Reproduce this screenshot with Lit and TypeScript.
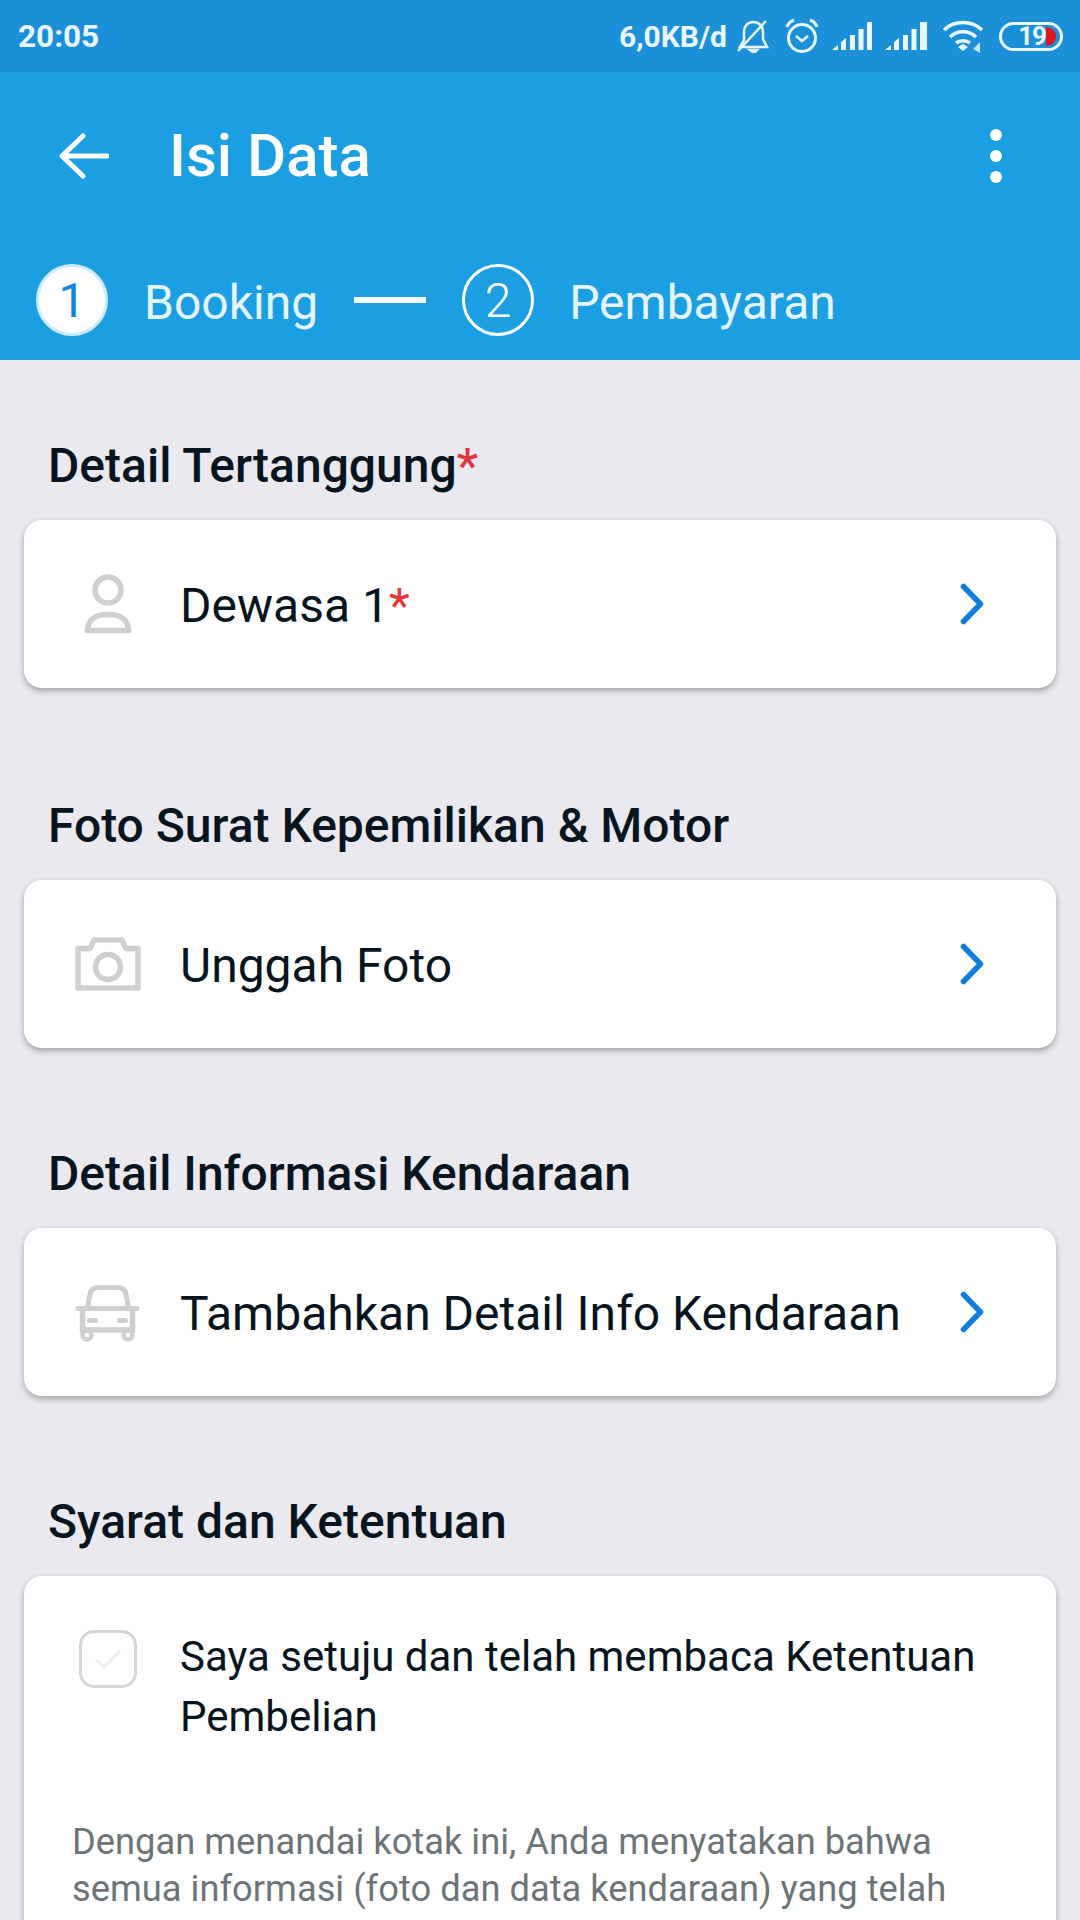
import { LitElement, html, css, svg } from "lit";
import { customElement } from "lit/decorators.js";

const chevron = html`<svg class="chev" viewBox="0 0 24 42" width="24" height="42"><path d="M3.500 3.500 L20.500 21 L3.500 38.500" fill="none" stroke="#0f7fdb" stroke-width="5.500" stroke-linecap="round" stroke-linejoin="round"/></svg>`;

const person = html`<svg viewBox="0 0 72 60" width="72" height="60"><circle cx="36" cy="16" r="13" fill="none" stroke="#cfcfcf" stroke-width="5.500"/><path d="M15.500 56.500 C15.500 46 23 40.500 36 40.500 C49 40.500 56.500 46 56.500 56.500 Z" fill="none" stroke="#cfcfcf" stroke-width="5.500" stroke-linejoin="round"/></svg>`;

const camera = html`<svg viewBox="0 0 72 54" width="72" height="54"><path d="M6 11.500 H18 L22 3 H50 L54 11.500 H66 V51 H6 Z" fill="none" stroke="#cfcfcf" stroke-width="5.500" stroke-linejoin="round"/><circle cx="36" cy="30" r="12.500" fill="none" stroke="#cfcfcf" stroke-width="5.500"/></svg>`;

const car = html`<svg viewBox="0 -3 72 60" width="72" height="60"><path d="M15.500 23 L18 9 C19 4 22 2.500 27 2.500 H45 C50 2.500 53 4 54 9 L56.500 23" fill="none" stroke="#cfcfcf" stroke-width="5"/><path d="M6 23.500 H65" stroke="#cfcfcf" stroke-width="5" stroke-linecap="round"/><path d="M10.500 23 V45 H60.500 V23" fill="none" stroke="#cfcfcf" stroke-width="5.500"/><rect x="15" y="33" width="11" height="5" rx="2.500" fill="#cfcfcf"/><rect x="45" y="33" width="11" height="5" rx="2.500" fill="#cfcfcf"/><circle cx="15" cy="50" r="4.500" fill="none" stroke="#cfcfcf" stroke-width="4.500"/><circle cx="56" cy="50" r="4.500" fill="none" stroke="#cfcfcf" stroke-width="4.500"/></svg>`;

const bars = (w: number) => svg`<svg viewBox="0 0 ${w} 30" width="${w}" height="30"><path d="M0 29 L6 24 V29 Z M9 21 L14 17 V29 H9 Z M18 14 H23 V29 H18 Z M26.500 8 H31.500 V29 H26.500 Z M35 1 H${w} V29 H35 Z" fill="#e9f7fd"/></svg>`;

@customElement("app-root")
export class AppRoot extends LitElement {
  static styles = css`
    :host { display: block; width: 1080px; height: 1920px; overflow: hidden; background: #e9e9ef; font-family: Roboto, "Liberation Sans", sans-serif; color: #08141e; }
    .status { height: 72px; background: #1b90d9; display: flex; align-items: center; padding: 0 17px 0 18px; color: #e9f7fd; font-weight: 700; font-size: 30px; }
    .time { flex: 1; font-size: 31.500px; }
    .speed { margin-right: 10px; }
    .status svg { display: block; flex: none; }
    .bell { margin-right: 16px; }
    .alarm { margin-right: 13px; }
    .sig1 { margin-right: 13px; }
    .sig2 { margin-right: 15px; }
    .wifi { margin-right: 15px; }
    .battery { position: relative; width: 64px; height: 29px; box-sizing: border-box; border: 3px solid #e9f7fd; border-radius: 15px; display: flex; align-items: center; justify-content: flex-end; padding-right: 14px; font-size: 26px; }
    .battery span { position: relative; letter-spacing: -1px; }
    .battery i { position: absolute; right: 4px; top: 2px; width: 10px; height: 19px; background: #e0141e; border-radius: 0 10px 10px 0; }
    .header { height: 288px; background: #1c9fe2; color: #fff; box-sizing: border-box; }
    .bar { height: 168px; display: flex; align-items: center; padding: 0 78px 0 59px; box-sizing: border-box; }
    .back { margin-right: 60px; display: block; }
    .title { flex: 1; font-size: 60px; font-weight: 500; line-height: 64px; }
    .dots { display: flex; flex-direction: column; gap: 9px; }
    .dots i { width: 12px; height: 12px; border-radius: 50%; background: #fff; }
    .steps { display: flex; align-items: center; padding-left: 36px; height: 72px; margin-top: 24px; font-size: 48px; color: #e6f5fd; }
    .num { width: 72px; height: 72px; box-sizing: border-box; border-radius: 50%; border: 3px solid #fff; display: flex; align-items: center; justify-content: center; font-size: 48px; font-weight: 300; color: #fff; flex: none; }
    .num.on { background: #fff; border-color: #cdebf9; color: #0f85e0; font-weight: 400; }
    .lab { margin-left: 36px; padding-top: 4px; }
    .lab.second { margin-left: 35px; }
    .line { width: 72px; height: 6px; background: #fff; margin: 0 36px; }
    .content { padding: 0 24px; }
    .sec { padding-top: 96px; }
    .sec.first { padding-top: 76px; margin-bottom: 12px; }
    h2 { margin: 0 0 26px; padding: 1px 0 0 24px; height: 57px; font-size: 48px; font-weight: 500; line-height: 58px; color: #08141e; }
    .star { color: #e2363f; }
    .card { background: #fff; border-radius: 18px; box-shadow: 0 3px 6px rgba(0, 0, 0, .3); height: 168px; display: flex; align-items: center; padding: 0 72px 0 48px; box-sizing: border-box; }
    .card svg { display: block; flex: none; }
    .ic { width: 72px; margin-right: 36px; flex: none; display: flex; justify-content: center; }
    .txt { flex: 1; font-size: 48px; line-height: 60px; padding-top: 4px; }
    .terms { height: 600px; display: block; padding: 54px 48px 0 48px; }
    .row { display: flex; align-items: flex-start; }
    .box { width: 58px; height: 58px; margin: 0 7px; box-sizing: border-box; border: 3px solid #d6d6d6; border-radius: 15px; display: flex; align-items: center; justify-content: center; }
    .row .txt { font-size: 42px; line-height: 60px; margin-top: -3px; padding-top: 0; }
    .note { margin: 71px 0 0; font-size: 36.300px; line-height: 47px; color: #6c7478; }
  `;

  private sec(title: string, icon: unknown, label: string, star = false, first = false) {
    return html`<section class="sec ${first ? "first" : ""}">
      <h2>${title}${star ? html`<span class="star">*</span>` : ""}</h2>
      <div class="card">
        <div class="ic">${icon}</div>
        <div class="txt">${label}${star ? html`<span class="star">*</span>` : ""}</div>
        ${chevron}
      </div>
    </section>`;
  }

  render() {
    return html`
      <div class="status">
        <span class="time">20:05</span>
        <span class="speed">6,0KB/d</span>
        <svg class="bell" viewBox="0 0 32 34" width="32" height="34" fill="none" stroke="#e9f7fd" stroke-width="2.500"><path d="M3 28 H30 L26 20 V13 C26 7 22 3 16 3 C10 3 7 8 7 13 V21 Z"/><path d="M1 32 L29 2"/><path d="M13 31 H20 L17 34 Z" fill="#e9f7fd"/></svg>
        <svg class="alarm" viewBox="0 0 34 36" width="34" height="36" fill="none" stroke="#e9f7fd" stroke-width="3"><circle cx="17" cy="20" r="13.500"/><path d="M11 18 L17 23 L23 18" stroke-width="2.500"/><path d="M2 9 C3 6 6 3 9 2 M25 2 C28 3 31 6 32 9"/></svg>
        <span class="sig1">${bars(40)}</span>
        <span class="sig2">${bars(42)}</span>
        <svg class="wifi" viewBox="0 0 42 33" width="42" height="33" fill="none" stroke="#e9f7fd" stroke-width="3.500"><path d="M2 10 C12 0 30 0 40 10"/><path d="M8 17 C15 10 27 10 34 17"/><path d="M14 23 C18 20 24 20 28 23"/><path d="M16 27 L21 24 L26 27 L21 31 Z" fill="#e9f7fd" stroke="none"/><path d="M38 22 V33 L31 29 Z" fill="#e9f7fd" stroke="none" opacity=".8"/></svg>
        <div class="battery"><i></i><span>19</span></div>
      </div>
      <div class="header">
        <div class="bar">
          <svg class="back" viewBox="0 0 50 48" width="50" height="48"><path d="M48 24 H4 M24 4 L3 24 L24 44" fill="none" stroke="#fff" stroke-width="5" stroke-linecap="round" stroke-linejoin="round"/></svg>
          <div class="title">Isi Data</div>
          <div class="dots"><i></i><i></i><i></i></div>
        </div>
        <div class="steps">
          <div class="num on">1</div>
          <div class="lab">Booking</div>
          <div class="line"></div>
          <div class="num">2</div>
          <div class="lab second">Pembayaran</div>
        </div>
      </div>
      <div class="content">
        ${this.sec("Detail Tertanggung", person, "Dewasa 1", true, true)}
        ${this.sec("Foto Surat Kepemilikan & Motor", camera, "Unggah Foto")}
        ${this.sec("Detail Informasi Kendaraan", car, "Tambahkan Detail Info Kendaraan")}
        <section class="sec">
          <h2>Syarat dan Ketentuan</h2>
          <div class="card terms">
            <div class="row">
              <div class="ic"><div class="box"><svg viewBox="0 0 30 24" width="30" height="24"><path d="M3 13 L11 20 L27 4" fill="none" stroke="#efefef" stroke-width="3.500"/></svg></div></div>
              <div class="txt">Saya setuju dan telah membaca Ketentuan Pembelian</div>
            </div>
            <div class="note">Dengan menandai kotak ini, Anda menyatakan bahwa semua informasi (foto dan data kendaraan) yang telah</div>
          </div>
        </section>
      </div>
    `;
  }
}
